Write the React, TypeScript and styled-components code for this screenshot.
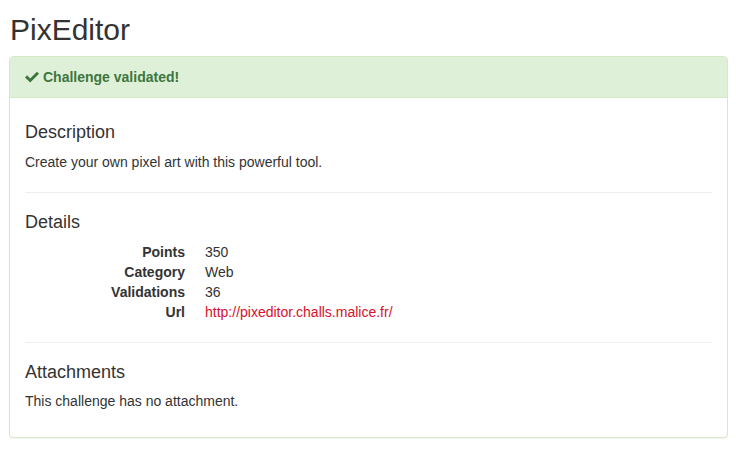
import React from 'react';
import styled, {createGlobalStyle} from 'styled-components';

const GlobalStyle = createGlobalStyle`
  html, body {
    margin: 0;
    background: #fff;
  }
  body {
    font-family: "Liberation Sans", Arial, Helvetica, sans-serif;
    font-size: 14px;
    line-height: 1.42857;
    color: #333;
  }
  * {
    box-sizing: border-box;
  }
`;

const Page = styled.div`
  padding: 0 8px 20px 9px;
`;

const Title = styled.h2`
  margin: 13px 0 10px 1px;
  font-size: 30px;
  font-weight: 500;
  line-height: 33px;
  color: #333;
`;

const Panel = styled.div`
  border: 1px solid #d6e9c6;
  border-radius: 4px;
  background: #fff;
  box-shadow: 0 1px 1px rgba(0, 0, 0, .05);
`;

const PanelHeading = styled.div`
  display: flex;
  align-items: center;
  gap: 4px;
  padding: 10px 15px;
  line-height: 20px;
  background: #dff0d8;
  border-bottom: 1px solid #d6e9c6;
  border-radius: 3px 3px 0 0;
  color: #3c763d;
  font-weight: bold;
`;

const PanelBody = styled.div`
  padding: 15px;
`;

const Heading = styled.h4`
  margin: 10px 0;
  font-size: 18px;
  font-weight: 500;
  line-height: 19.8px;
`;

const Text = styled.p`
  margin: 0 0 10px;
`;

const Rule = styled.hr`
  margin: 19px 0 20px;
  border: 0;
  border-top: 1px solid #eee;
`;

const DetailList = styled.dl`
  display: grid;
  grid-template-columns: 160px auto;
  column-gap: 20px;
  margin: 0 0 19px;
`;

const Term = styled.dt`
  text-align: right;
  font-weight: bold;
`;

const Value = styled.dd`
  margin: 0;
`;

const Link = styled.a`
  color: #d7102b;
  text-decoration: none;
`;

function CheckIcon() {
  return (
    <svg width="14" height="12" viewBox="0 0 14 12">
      <path d="M0 6.4 L2.1 4.3 L5.2 7.4 L11.9 0.7 L14 2.8 L5.2 11.6 Z" fill="#3c763d"/>
    </svg>
  );
}

const details: [string, React.ReactNode][] = [
  ['Points', '350'],
  ['Category', 'Web'],
  ['Validations', '36'],
  ['Url', <Link href="#">http://pixeditor.challs.malice.fr/</Link>],
];

export default function App() {
  return (
    <Page>
      <GlobalStyle/>
      <Title>PixEditor</Title>
      <Panel>
        <PanelHeading>
          <CheckIcon/>
          Challenge validated!
        </PanelHeading>
        <PanelBody>
          <section>
            <Heading>Description</Heading>
            <Text>Create your own pixel art with this powerful tool.</Text>
          </section>
          <Rule/>
          <section>
            <Heading>Details</Heading>
            <DetailList>
              {details.map(([term, value]) => (
                <React.Fragment key={term}>
                  <Term>{term}</Term>
                  <Value>{value}</Value>
                </React.Fragment>
              ))}
            </DetailList>
          </section>
          <Rule/>
          <section>
            <Heading>Attachments</Heading>
            <Text>This challenge has no attachment.</Text>
          </section>
        </PanelBody>
      </Panel>
    </Page>
  );
}
